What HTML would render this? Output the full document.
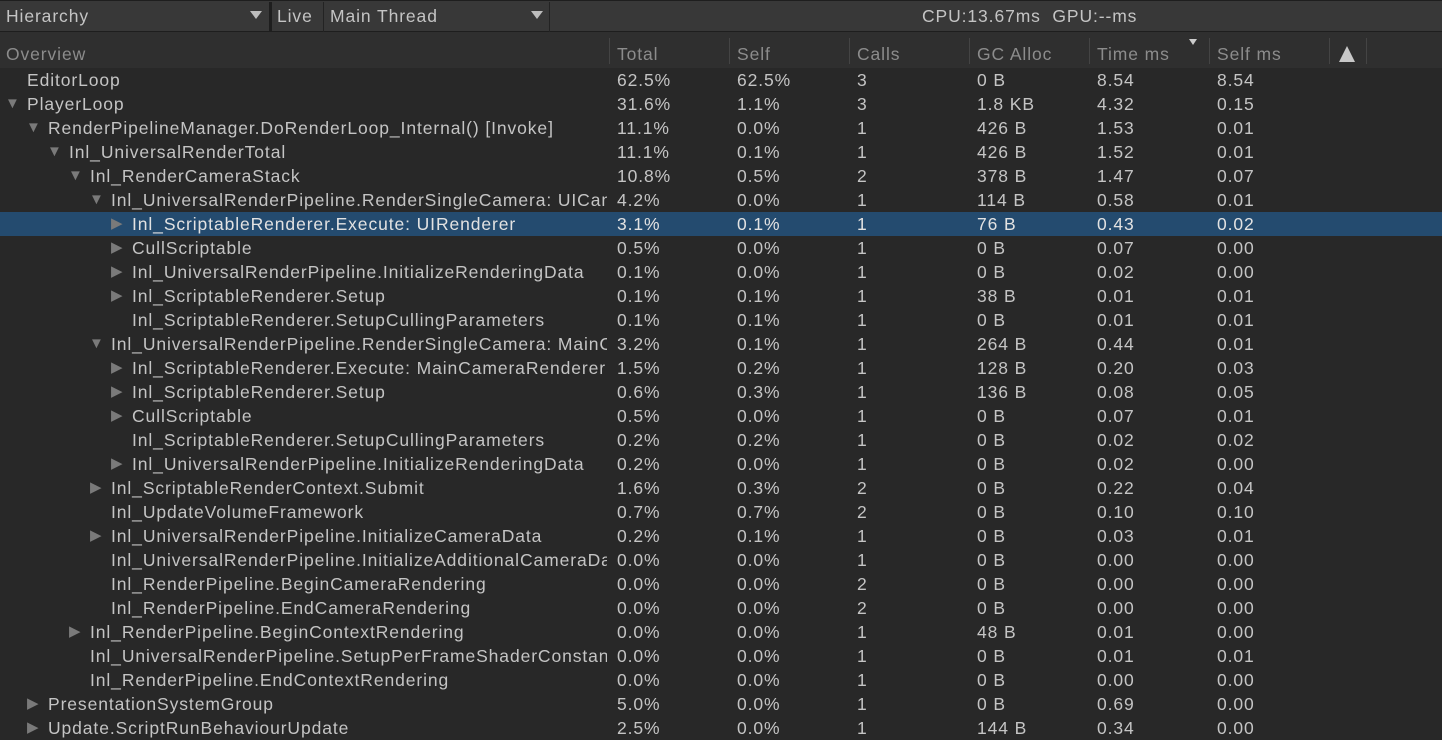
<!DOCTYPE html>
<html><head><meta charset="utf-8"><style>
*{margin:0;padding:0;box-sizing:border-box}
body{width:1442px;height:734px;overflow:hidden;background:#282828;font-family:"Liberation Sans",sans-serif;font-size:17.5px;letter-spacing:0.9px;color:#c4c4c4;position:relative}
.tb{position:absolute;left:0;top:0;width:1442px;height:32px;background:#383838;border-bottom:1px solid #1e1e1e;border-top:1px solid #1e1e1e}
.tb span{position:absolute;top:5px;color:#c4c4c4}
.dd{position:absolute;top:10px;width:0;height:0;border-left:6px solid transparent;border-right:6px solid transparent;border-top:8px solid #bcbcbc}
.vs{position:absolute;top:1px;height:30px;width:1px;background:#232323}
.hd{position:absolute;left:0;top:32px;width:1442px;height:36px;background:#2f2f2f}
.hd span{position:absolute;top:12px;color:#8c8c8c}
.hd i{position:absolute;top:6px;height:26px;width:1px;background:#444}
.rows{position:absolute;left:0;top:68px;width:1442px}
.r{height:24px;position:relative;white-space:nowrap;line-height:24px}
.r.s{background:#244b6f;color:#e2e2e2}
.n{position:absolute;left:0;top:0;width:607px;height:24px;overflow:hidden}
.n b{font-weight:normal;position:absolute;top:0}
.a{position:absolute;top:0;color:#7a7a7a;font-size:15px;letter-spacing:0}
.c{position:absolute;top:0}
</style></head><body>
<div class="tb">
<span style="left:6px">Hierarchy</span><div class="dd" style="left:250px"></div>
<div class="vs" style="left:269px;width:3px;background:#1e1e1e"></div>
<span style="left:277px">Live</span>
<div class="vs" style="left:323px"></div>
<span style="left:330px">Main Thread</span><div class="dd" style="left:531px"></div>
<div class="vs" style="left:549px"></div>
<span style="left:922px">CPU:13.67ms&nbsp; GPU:--ms</span>
</div>
<div class="hd">
<span style="left:6px">Overview</span>
<i style="left:609px"></i><span style="left:617px">Total</span>
<i style="left:729px"></i><span style="left:737px">Self</span>
<i style="left:849px"></i><span style="left:857px">Calls</span>
<i style="left:969px"></i><span style="left:977px">GC Alloc</span>
<i style="left:1089px"></i><span style="left:1097px">Time ms</span>
<div style="position:absolute;left:1189px;top:7px;border-left:4px solid transparent;border-right:4px solid transparent;border-top:6px solid #ccc"></div>
<i style="left:1209px"></i><span style="left:1217px">Self ms</span>
<i style="left:1329px"></i>
<svg style="position:absolute;left:1338px;top:13px" width="18" height="18" viewBox="0 0 18 18"><path d="M9 1L17 17H1Z" fill="#c8c8c8"/></svg>
<i style="left:1366px"></i>
</div>
<div class="rows" id="rows">
<div class="r"><div class="n"><b style="left:27px">EditorLoop</b></div><span class="c" style="left:617px">62.5%</span><span class="c" style="left:737px">62.5%</span><span class="c" style="left:857px">3</span><span class="c" style="left:977px">0 B</span><span class="c" style="left:1097px">8.54</span><span class="c" style="left:1217px">8.54</span></div>
<div class="r"><div class="n"><span class="a" style="left:5px">▼</span><b style="left:27px">PlayerLoop</b></div><span class="c" style="left:617px">31.6%</span><span class="c" style="left:737px">1.1%</span><span class="c" style="left:857px">3</span><span class="c" style="left:977px">1.8 KB</span><span class="c" style="left:1097px">4.32</span><span class="c" style="left:1217px">0.15</span></div>
<div class="r"><div class="n"><span class="a" style="left:26px">▼</span><b style="left:48px">RenderPipelineManager.DoRenderLoop_Internal() [Invoke]</b></div><span class="c" style="left:617px">11.1%</span><span class="c" style="left:737px">0.0%</span><span class="c" style="left:857px">1</span><span class="c" style="left:977px">426 B</span><span class="c" style="left:1097px">1.53</span><span class="c" style="left:1217px">0.01</span></div>
<div class="r"><div class="n"><span class="a" style="left:47px">▼</span><b style="left:69px">Inl_UniversalRenderTotal</b></div><span class="c" style="left:617px">11.1%</span><span class="c" style="left:737px">0.1%</span><span class="c" style="left:857px">1</span><span class="c" style="left:977px">426 B</span><span class="c" style="left:1097px">1.52</span><span class="c" style="left:1217px">0.01</span></div>
<div class="r"><div class="n"><span class="a" style="left:68px">▼</span><b style="left:90px">Inl_RenderCameraStack</b></div><span class="c" style="left:617px">10.8%</span><span class="c" style="left:737px">0.5%</span><span class="c" style="left:857px">2</span><span class="c" style="left:977px">378 B</span><span class="c" style="left:1097px">1.47</span><span class="c" style="left:1217px">0.07</span></div>
<div class="r"><div class="n"><span class="a" style="left:89px">▼</span><b style="left:111px">Inl_UniversalRenderPipeline.RenderSingleCamera: UICamera</b></div><span class="c" style="left:617px">4.2%</span><span class="c" style="left:737px">0.0%</span><span class="c" style="left:857px">1</span><span class="c" style="left:977px">114 B</span><span class="c" style="left:1097px">0.58</span><span class="c" style="left:1217px">0.01</span></div>
<div class="r s"><div class="n"><span class="a" style="left:111px">▶</span><b style="left:132px">Inl_ScriptableRenderer.Execute: UIRenderer</b></div><span class="c" style="left:617px">3.1%</span><span class="c" style="left:737px">0.1%</span><span class="c" style="left:857px">1</span><span class="c" style="left:977px">76 B</span><span class="c" style="left:1097px">0.43</span><span class="c" style="left:1217px">0.02</span></div>
<div class="r"><div class="n"><span class="a" style="left:111px">▶</span><b style="left:132px">CullScriptable</b></div><span class="c" style="left:617px">0.5%</span><span class="c" style="left:737px">0.0%</span><span class="c" style="left:857px">1</span><span class="c" style="left:977px">0 B</span><span class="c" style="left:1097px">0.07</span><span class="c" style="left:1217px">0.00</span></div>
<div class="r"><div class="n"><span class="a" style="left:111px">▶</span><b style="left:132px">Inl_UniversalRenderPipeline.InitializeRenderingData</b></div><span class="c" style="left:617px">0.1%</span><span class="c" style="left:737px">0.0%</span><span class="c" style="left:857px">1</span><span class="c" style="left:977px">0 B</span><span class="c" style="left:1097px">0.02</span><span class="c" style="left:1217px">0.00</span></div>
<div class="r"><div class="n"><span class="a" style="left:111px">▶</span><b style="left:132px">Inl_ScriptableRenderer.Setup</b></div><span class="c" style="left:617px">0.1%</span><span class="c" style="left:737px">0.1%</span><span class="c" style="left:857px">1</span><span class="c" style="left:977px">38 B</span><span class="c" style="left:1097px">0.01</span><span class="c" style="left:1217px">0.01</span></div>
<div class="r"><div class="n"><b style="left:132px">Inl_ScriptableRenderer.SetupCullingParameters</b></div><span class="c" style="left:617px">0.1%</span><span class="c" style="left:737px">0.1%</span><span class="c" style="left:857px">1</span><span class="c" style="left:977px">0 B</span><span class="c" style="left:1097px">0.01</span><span class="c" style="left:1217px">0.01</span></div>
<div class="r"><div class="n"><span class="a" style="left:89px">▼</span><b style="left:111px">Inl_UniversalRenderPipeline.RenderSingleCamera: MainCamera</b></div><span class="c" style="left:617px">3.2%</span><span class="c" style="left:737px">0.1%</span><span class="c" style="left:857px">1</span><span class="c" style="left:977px">264 B</span><span class="c" style="left:1097px">0.44</span><span class="c" style="left:1217px">0.01</span></div>
<div class="r"><div class="n"><span class="a" style="left:111px">▶</span><b style="left:132px">Inl_ScriptableRenderer.Execute: MainCameraRenderer</b></div><span class="c" style="left:617px">1.5%</span><span class="c" style="left:737px">0.2%</span><span class="c" style="left:857px">1</span><span class="c" style="left:977px">128 B</span><span class="c" style="left:1097px">0.20</span><span class="c" style="left:1217px">0.03</span></div>
<div class="r"><div class="n"><span class="a" style="left:111px">▶</span><b style="left:132px">Inl_ScriptableRenderer.Setup</b></div><span class="c" style="left:617px">0.6%</span><span class="c" style="left:737px">0.3%</span><span class="c" style="left:857px">1</span><span class="c" style="left:977px">136 B</span><span class="c" style="left:1097px">0.08</span><span class="c" style="left:1217px">0.05</span></div>
<div class="r"><div class="n"><span class="a" style="left:111px">▶</span><b style="left:132px">CullScriptable</b></div><span class="c" style="left:617px">0.5%</span><span class="c" style="left:737px">0.0%</span><span class="c" style="left:857px">1</span><span class="c" style="left:977px">0 B</span><span class="c" style="left:1097px">0.07</span><span class="c" style="left:1217px">0.01</span></div>
<div class="r"><div class="n"><b style="left:132px">Inl_ScriptableRenderer.SetupCullingParameters</b></div><span class="c" style="left:617px">0.2%</span><span class="c" style="left:737px">0.2%</span><span class="c" style="left:857px">1</span><span class="c" style="left:977px">0 B</span><span class="c" style="left:1097px">0.02</span><span class="c" style="left:1217px">0.02</span></div>
<div class="r"><div class="n"><span class="a" style="left:111px">▶</span><b style="left:132px">Inl_UniversalRenderPipeline.InitializeRenderingData</b></div><span class="c" style="left:617px">0.2%</span><span class="c" style="left:737px">0.0%</span><span class="c" style="left:857px">1</span><span class="c" style="left:977px">0 B</span><span class="c" style="left:1097px">0.02</span><span class="c" style="left:1217px">0.00</span></div>
<div class="r"><div class="n"><span class="a" style="left:90px">▶</span><b style="left:111px">Inl_ScriptableRenderContext.Submit</b></div><span class="c" style="left:617px">1.6%</span><span class="c" style="left:737px">0.3%</span><span class="c" style="left:857px">2</span><span class="c" style="left:977px">0 B</span><span class="c" style="left:1097px">0.22</span><span class="c" style="left:1217px">0.04</span></div>
<div class="r"><div class="n"><b style="left:111px">Inl_UpdateVolumeFramework</b></div><span class="c" style="left:617px">0.7%</span><span class="c" style="left:737px">0.7%</span><span class="c" style="left:857px">2</span><span class="c" style="left:977px">0 B</span><span class="c" style="left:1097px">0.10</span><span class="c" style="left:1217px">0.10</span></div>
<div class="r"><div class="n"><span class="a" style="left:90px">▶</span><b style="left:111px">Inl_UniversalRenderPipeline.InitializeCameraData</b></div><span class="c" style="left:617px">0.2%</span><span class="c" style="left:737px">0.1%</span><span class="c" style="left:857px">1</span><span class="c" style="left:977px">0 B</span><span class="c" style="left:1097px">0.03</span><span class="c" style="left:1217px">0.01</span></div>
<div class="r"><div class="n"><b style="left:111px">Inl_UniversalRenderPipeline.InitializeAdditionalCameraData</b></div><span class="c" style="left:617px">0.0%</span><span class="c" style="left:737px">0.0%</span><span class="c" style="left:857px">1</span><span class="c" style="left:977px">0 B</span><span class="c" style="left:1097px">0.00</span><span class="c" style="left:1217px">0.00</span></div>
<div class="r"><div class="n"><b style="left:111px">Inl_RenderPipeline.BeginCameraRendering</b></div><span class="c" style="left:617px">0.0%</span><span class="c" style="left:737px">0.0%</span><span class="c" style="left:857px">2</span><span class="c" style="left:977px">0 B</span><span class="c" style="left:1097px">0.00</span><span class="c" style="left:1217px">0.00</span></div>
<div class="r"><div class="n"><b style="left:111px">Inl_RenderPipeline.EndCameraRendering</b></div><span class="c" style="left:617px">0.0%</span><span class="c" style="left:737px">0.0%</span><span class="c" style="left:857px">2</span><span class="c" style="left:977px">0 B</span><span class="c" style="left:1097px">0.00</span><span class="c" style="left:1217px">0.00</span></div>
<div class="r"><div class="n"><span class="a" style="left:69px">▶</span><b style="left:90px">Inl_RenderPipeline.BeginContextRendering</b></div><span class="c" style="left:617px">0.0%</span><span class="c" style="left:737px">0.0%</span><span class="c" style="left:857px">1</span><span class="c" style="left:977px">48 B</span><span class="c" style="left:1097px">0.01</span><span class="c" style="left:1217px">0.00</span></div>
<div class="r"><div class="n"><b style="left:90px">Inl_UniversalRenderPipeline.SetupPerFrameShaderConstants</b></div><span class="c" style="left:617px">0.0%</span><span class="c" style="left:737px">0.0%</span><span class="c" style="left:857px">1</span><span class="c" style="left:977px">0 B</span><span class="c" style="left:1097px">0.01</span><span class="c" style="left:1217px">0.01</span></div>
<div class="r"><div class="n"><b style="left:90px">Inl_RenderPipeline.EndContextRendering</b></div><span class="c" style="left:617px">0.0%</span><span class="c" style="left:737px">0.0%</span><span class="c" style="left:857px">1</span><span class="c" style="left:977px">0 B</span><span class="c" style="left:1097px">0.00</span><span class="c" style="left:1217px">0.00</span></div>
<div class="r"><div class="n"><span class="a" style="left:27px">▶</span><b style="left:48px">PresentationSystemGroup</b></div><span class="c" style="left:617px">5.0%</span><span class="c" style="left:737px">0.0%</span><span class="c" style="left:857px">1</span><span class="c" style="left:977px">0 B</span><span class="c" style="left:1097px">0.69</span><span class="c" style="left:1217px">0.00</span></div>
<div class="r"><div class="n"><span class="a" style="left:27px">▶</span><b style="left:48px">Update.ScriptRunBehaviourUpdate</b></div><span class="c" style="left:617px">2.5%</span><span class="c" style="left:737px">0.0%</span><span class="c" style="left:857px">1</span><span class="c" style="left:977px">144 B</span><span class="c" style="left:1097px">0.34</span><span class="c" style="left:1217px">0.00</span></div>
</div>
</body></html>
